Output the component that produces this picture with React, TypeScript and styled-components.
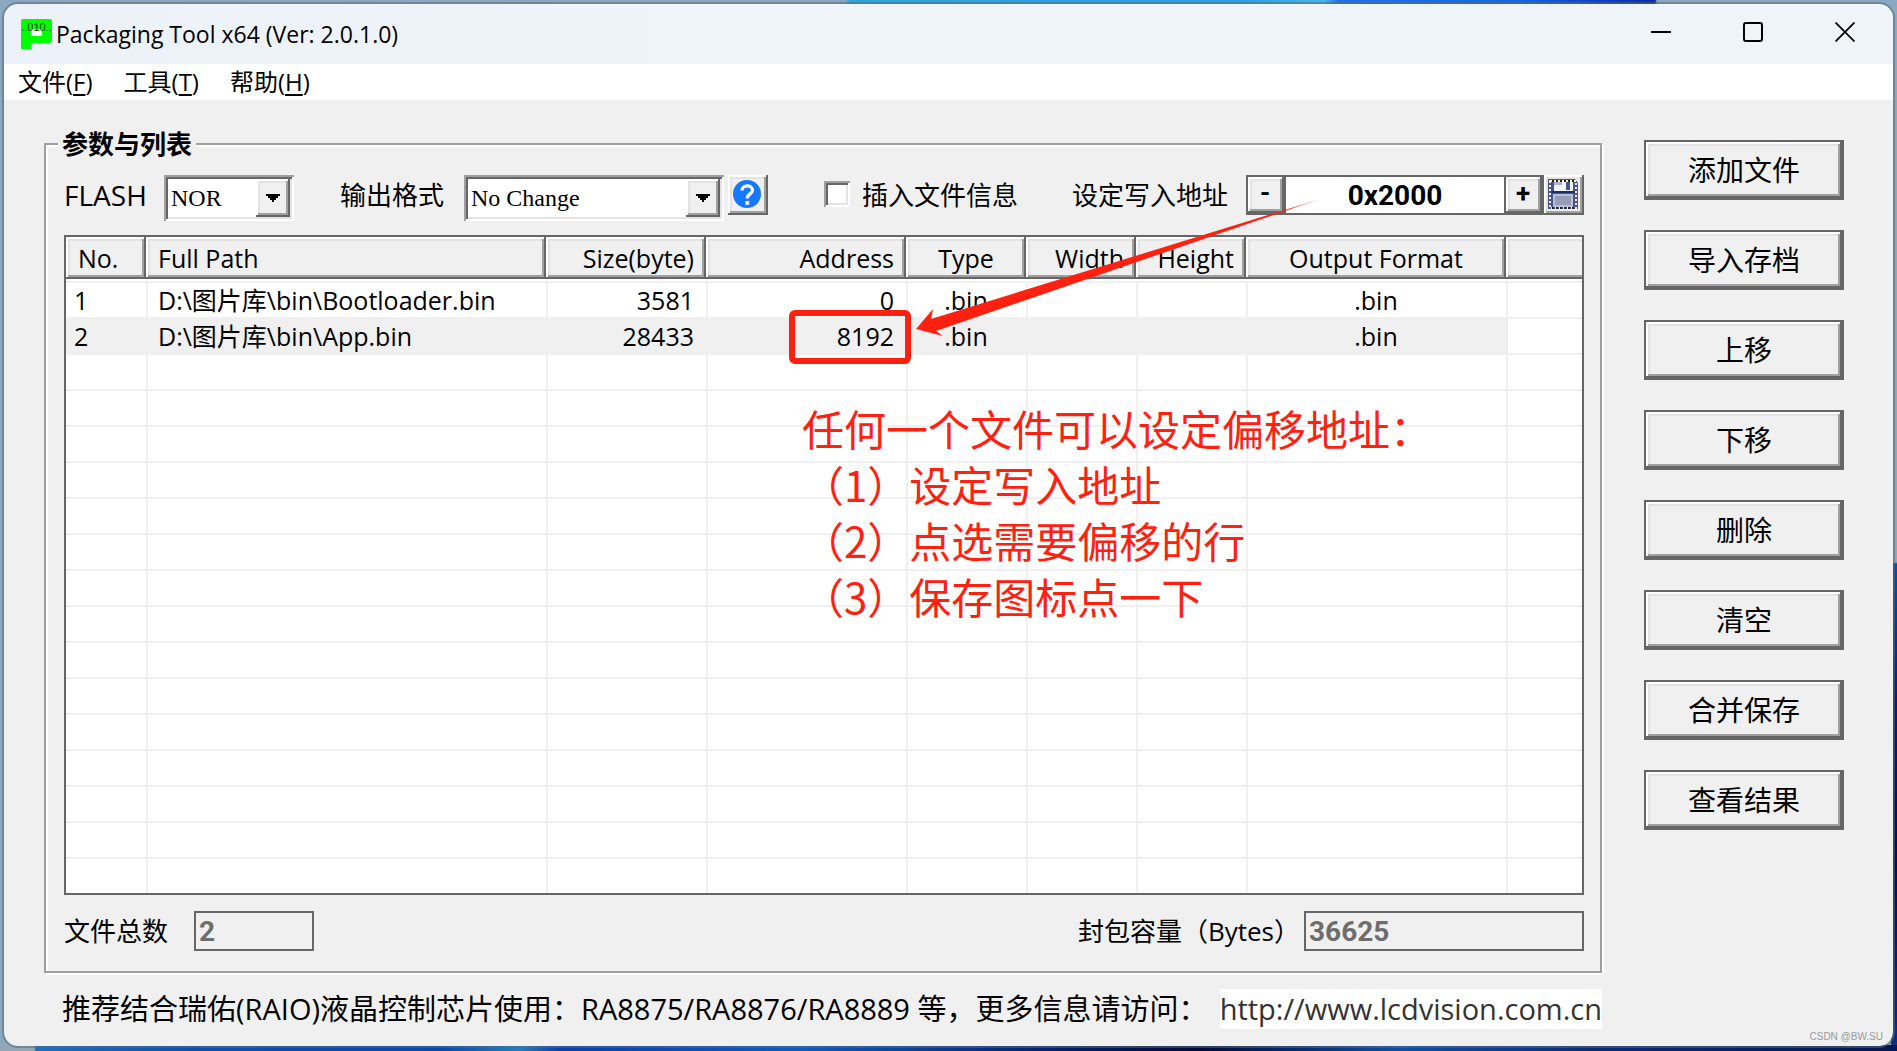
import React, { useState } from "react";
import styled, { createGlobalStyle, css } from "styled-components";

const face = "#f0f0f0";
const dark = "#666666";
const shade = "#a0a0a0";
const light = "#e3e3e3";
const red = "#ff2010";
const uiFont = `"Open Sans", "Noto Sans CJK SC", sans-serif`;

const GlobalStyle = createGlobalStyle`
  *, *::before, *::after { box-sizing: border-box; }
  body { margin: 0; font-family: ${uiFont}; font-size: 24px; color: #000; }
  button, input, select { font: inherit; color: inherit; border-radius: 0; margin: 0; }
`;

const raised = css`
  background: ${face};
  box-shadow: inset -2px -2px 0 ${dark}, inset 2px 2px 0 #fff,
    inset -4px -4px 0 ${shade}, inset 4px 4px 0 ${light};
`;

const Desktop = styled.div`
  min-height: 100vh;
  display: flex;
  padding: 4px 4px 5px;
  background:
    linear-gradient(90deg, #94a7b6 0 34px, #1c6fc4 36px, #0a4fae 200px, #0848b0 440px, #1f7fc4 520px, #0a3fae 560px, #0c5cc4 800px, #05206e 1050px, #020a3a 1200px, #0b4fae 1400px, #0a2a78 1600px, #041650 100%) bottom / 100% 6px no-repeat,
    linear-gradient(90deg, transparent 845px, #2ba4dc 850px, #2f9fe8 1240px, #43b6e6 1325px, #1c74e8 1338px, #1466e4 1520px, #0c3fc8 1600px, #0a2c9c 1655px, transparent 1657px) top / 100% 4px no-repeat,
    linear-gradient(180deg, #8aa9c0 0 562px, #0d4da4 564px, #04206e 700px, #001048 860px, #0c2f80 100%) right / 6px 100% no-repeat,
    #8ba8c0;
`;

const AppWindow = styled.div`
  position: relative;
  flex: 1;
  min-width: 0;
  display: flex;
  flex-direction: column;
  border-radius: 14px;
  overflow: hidden;
  background: ${face};
  outline: 2px solid rgba(90, 105, 120, 0.55);
`;

const TitleBar = styled.header`
  display: flex;
  align-items: center;
  height: 60px;
  padding: 0 2px 0 17px;
  background: linear-gradient(90deg, #edf2fa, #eff4f8 40%);
`;

const AppTitle = styled.h1`
  flex: 1;
  margin: 0 0 0 4px;
  font-size: 23px;
  line-height: 30px;
  font-weight: 400;
`;

const CaptionButton = styled.button`
  display: grid;
  place-items: center;
  align-self: flex-start;
  width: 92px;
  height: 56px;
  padding: 0;
  border: 0;
  background: transparent;
`;

const MenuBar = styled.nav`
  display: flex;
  align-items: center;
  gap: 31px;
  height: 36px;
  padding: 0 14px;
  background: #fff;
`;

const MenuItem = styled.button`
  padding: 0;
  border: 0;
  background: transparent;
  font-size: 24px;
  line-height: 34px;
  u { text-underline-offset: 3px; text-decoration-thickness: 2px; }
`;

const Body = styled.main`
  flex: 1;
  display: grid;
  grid-template-columns: minmax(0, 1fr) 200px;
  grid-template-rows: auto 1fr;
  column-gap: 42px;
  row-gap: 16px;
  padding: 25px 49px 17px 40px;
`;

const Group = styled.fieldset`
  min-width: 0;
  margin: 0;
  padding: 0 16px 20px 18px;
  border: 2px solid ${shade};
  box-shadow: 2px 2px 0 #fff, inset 2px 2px 0 #fff;
`;

const Legend = styled.legend`
  margin-left: -6px;
  padding: 0 4px;
  background: ${face};
  font-size: 26px;
  line-height: 38px;
  font-weight: 700;
`;

const Toolbar = styled.div`
  display: flex;
  align-items: flex-start;
  height: 46px;
  margin: 12px 0 14px;
`;

const Label = styled.label<{ $width?: number; $size?: number }>`
  flex: none;
  width: ${(p) => (p.$width ? `${p.$width}px` : "auto")};
  font-size: ${(p) => p.$size ?? 26}px;
  line-height: 40px;
  white-space: nowrap;
`;

const SelectBox = styled.div<{ $width: number; $after: number }>`
  flex: none;
  display: grid;
  width: ${(p) => p.$width}px;
  height: 46px;
  margin-right: ${(p) => p.$after}px;
  padding: 4px;
  background: #fff;
  box-shadow: inset 2px 2px 0 ${shade}, inset -2px -2px 0 #fff,
    inset 4px 4px 0 ${dark}, inset -4px -4px 0 ${light};
`;

const Select = styled.select`
  grid-area: 1 / 1;
  appearance: none;
  width: 100%;
  padding: 0 36px 0 3px;
  border: 0;
  background: transparent;
  font-family: "Liberation Serif", "Noto Sans CJK SC", serif;
  font-size: 24px;
`;

const DropArrow = styled.span`
  grid-area: 1 / 1;
  justify-self: end;
  display: grid;
  place-items: center;
  width: 34px;
  height: 38px;
  pointer-events: none;
  ${raised}
`;

const IconButton = styled.button`
  flex: none;
  display: grid;
  place-items: center;
  width: 40px;
  height: 40px;
  padding: 0 2px 2px 0;
  border: 0;
  ${raised}
`;

const StepButton = styled.button`
  flex: none;
  width: 40px;
  padding: 0 2px 4px 0;
  border: 2px solid ${dark};
  font-family: Roboto, "Noto Sans CJK SC", sans-serif;
  font-size: 26px;
  line-height: 30px;
  font-weight: 700;
  ${raised}
`;

const CheckLabel = styled(Label)`
  display: flex;
  gap: 12px;
  margin-left: 56px;
`;

const CheckBox = styled.input`
  appearance: none;
  width: 26px;
  height: 26px;
  margin-top: 6px;
  background: #fff;
  box-shadow: inset 2px 2px 0 ${shade}, inset -2px -2px 0 #fff,
    inset 4px 4px 0 ${dark}, inset -4px -4px 0 ${light};
  &:checked { background: ${dark}; }
`;

const AddressLabel = styled(Label)`
  margin-left: auto;
  margin-right: 18px;
`;

const AddressField = styled.div`
  display: flex;
  height: 40px;
`;

const AddressInput = styled.input`
  width: 218px;
  padding: 0;
  border: solid ${dark};
  border-width: 2px 0;
  background: #fff;
  font-family: Roboto, "Noto Sans CJK SC", sans-serif;
  font-size: 28px;
  font-weight: 700;
  text-align: center;
`;

const ListBox = styled.div`
  position: relative;
  border: 2px solid ${dark};
  background: #fff;
`;

const Table = styled.table`
  width: 100%;
  table-layout: fixed;
  border-collapse: separate;
  border-spacing: 0;
  font-size: 25px;
  line-height: 34px;
  white-space: nowrap;
`;

type Align = "left" | "right" | "center";

const HeadCell = styled.th<{ $align: Align }>`
  height: 44px;
  padding: 0 12px;
  border-bottom: 2px solid #fff;
  font-weight: 400;
  text-align: ${(p) => p.$align};
  ${raised}
  &:last-child {
    box-shadow: inset 0 -2px 0 ${dark}, inset 2px 2px 0 #fff,
      inset 0 -4px 0 ${shade}, inset 4px 4px 0 ${light};
  }
`;

const Cell = styled.td<{ $align: Align; $selected: boolean }>`
  height: 36px;
  padding: 0 12px 0 10px;
  border-top: 2px solid ${face};
  border-left: 2px solid ${face};
  background: ${(p) => (p.$selected ? face : "#fff")};
  text-align: ${(p) => p.$align};
  &:first-child { border-left: 0; padding-left: 8px; }
`;

const Note = styled.div`
  position: absolute;
  left: 736px;
  top: 163px;
  color: ${red};
  font-family: "Noto Sans CJK SC", sans-serif;
  font-size: 42px;
  line-height: 56px;
  white-space: nowrap;
  p { margin: 0; }
`;

const Markup = styled.svg`
  position: absolute;
  left: 718px;
  top: -46px;
  width: 540px;
  height: 180px;
  pointer-events: none;
`;

const Totals = styled.div`
  display: flex;
  justify-content: space-between;
  margin-top: 16px;
`;

const Total = styled.div<{ $gap: number }>`
  display: flex;
  gap: ${(p) => p.$gap}px;
`;

const TotalInput = styled.input<{ $width: number }>`
  width: ${(p) => p.$width}px;
  height: 40px;
  padding: 0 3px;
  border: 2px solid ${dark};
  background: ${face};
  color: #6d6d6d;
  font-family: Roboto, "Noto Sans CJK SC", sans-serif;
  font-size: 28px;
  font-weight: 700;
`;

const SideButtons = styled.div`
  display: flex;
  flex-direction: column;
  gap: 30px;
  padding-top: 15px;
`;

const SideButton = styled.button`
  height: 60px;
  padding: 0;
  border: 2px solid ${dark};
  font-size: 28px;
  line-height: 40px;
  ${raised}
`;

const Footer = styled.footer`
  display: flex;
  justify-content: space-between;
  align-items: flex-start;
  padding: 0 0 0 18px;
  font-size: 29px;
  line-height: 40px;
  white-space: nowrap;
`;

const SiteLink = styled.a`
  flex: none;
  background: #fff;
  color: #333;
  text-decoration: none;
`;

const Watermark = styled.span`
  position: absolute;
  right: 10px;
  bottom: 1px;
  color: #999;
  font-family: "Liberation Sans", "Noto Sans CJK SC", sans-serif;
  font-size: 10px;
  line-height: 16px;
`;

const AppLogo = () => (
  <svg width="31" height="30" viewBox="0 0 31 30" aria-hidden="true">
    <path d="M2 0H29Q31 0 31 2V21Q31 24 28 24H10V30H0V2Q0 0 2 0Z" fill="#00ff00" />
    <path d="M10 10H21V17H10Z" fill="#fff" />
    <text x="15.5" y="12" textAnchor="middle" fontFamily="Liberation Sans, sans-serif" fontSize="11" fill="#003c00">..010..</text>
  </svg>
);

const HelpIcon = () => (
  <svg width="30" height="30" viewBox="0 0 30 30" aria-hidden="true">
    <circle cx="15" cy="15" r="14" fill="#1677ff" />
    <path d="M10 11.5C10 5.5 20.5 5.5 20.5 11.2C20.5 15 15.2 14.8 15.2 19.5" fill="none" stroke="#fff" strokeWidth="3.2" />
    <rect x="13.4" y="22" width="3.8" height="3.8" fill="#fff" />
  </svg>
);

const SaveIcon = () => (
  <svg width="32" height="32" viewBox="0 0 32 32" aria-hidden="true">
    <path d="M1 1H28L31 5V31H1Z" fill="#46568c" />
    <rect x="7" y="3" width="19" height="10" fill="#f2f4fa" />
    <path d="M7 3H15V7H7Z" fill="#aab2cc" />
    <rect x="19" y="4" width="4" height="8" fill="#46568c" />
    <path d="M4 14H28" stroke="#1b2f66" strokeWidth="2" />
    <rect x="6" y="16" width="20" height="13" fill="#b9bfd4" />
    <rect x="8" y="18" width="16" height="9" fill="#959db8" />
    <rect x="3" y="3" width="26" height="27" fill="none" stroke="#fff0c8" strokeWidth="2" strokeDasharray="2 2" />
    <path d="M3 3H29M3 30H29" stroke="#222" strokeWidth="2" strokeDasharray="2 2" strokeDashoffset="2" />
  </svg>
);

type Column = { title: string; align: Align; width?: number };

const columns: Column[] = [
  { title: "No.", align: "left", width: 80 },
  { title: "Full Path", align: "left", width: 400 },
  { title: "Size(byte)", align: "right", width: 160 },
  { title: "Address", align: "right", width: 200 },
  { title: "Type", align: "center", width: 120 },
  { title: "Width", align: "right", width: 110 },
  { title: "Height", align: "right", width: 110 },
  { title: "Output Format", align: "center", width: 260 },
  { title: "", align: "left" },
];

const files = [
  ["1", "D:\\图片库\\bin\\Bootloader.bin", "3581", "0", ".bin", "", "", ".bin"],
  ["2", "D:\\图片库\\bin\\App.bin", "28433", "8192", ".bin", "", "", ".bin"],
];

const rowCount = 17;
const selectedRow = 1;

const menus = [
  ["文件", "F"],
  ["工具", "T"],
  ["帮助", "H"],
];

const actions = ["添加文件", "导入存档", "上移", "下移", "删除", "清空", "合并保存", "查看结果"];

const Arrow = () => (
  <DropArrow>
    <svg width="14" height="8" viewBox="0 0 14 8" aria-hidden="true">
      <path d="M0 0H14V2H12V4H10V6H8V8H6V6H4V4H2V2H0Z" fill="#000" />
    </svg>
  </DropArrow>
);

export default function App() {
  const [address, setAddress] = useState(0x2000);
  const step = (delta: number) => setAddress((a) => Math.max(0, a + delta));

  return (
    <Desktop>
      <GlobalStyle />
      <AppWindow>
        <TitleBar>
          <AppLogo />
          <AppTitle>Packaging Tool x64 (Ver: 2.0.1.0)</AppTitle>
          <CaptionButton aria-label="Minimize">
            <svg width="20" height="20" viewBox="0 0 20 20"><path d="M0 10H20" stroke="#000" strokeWidth="2" /></svg>
          </CaptionButton>
          <CaptionButton aria-label="Maximize">
            <svg width="20" height="20" viewBox="0 0 20 20"><rect x="1" y="1" width="18" height="18" rx="2" fill="none" stroke="#000" strokeWidth="2" /></svg>
          </CaptionButton>
          <CaptionButton aria-label="Close">
            <svg width="20" height="20" viewBox="0 0 20 20"><path d="M0.5 0.5L19.5 19.5M19.5 0.5L0.5 19.5" stroke="#000" strokeWidth="1.8" /></svg>
          </CaptionButton>
        </TitleBar>

        <MenuBar>
          {menus.map(([name, key]) => (
            <MenuItem key={key}>{name}(<u>{key}</u>)</MenuItem>
          ))}
        </MenuBar>

        <Body>
          <Group>
            <Legend>参数与列表</Legend>

            <Toolbar>
              <Label htmlFor="flash" $width={100} $size={28}>FLASH</Label>
              <SelectBox $width={130} $after={46}>
                <Select id="flash" defaultValue="NOR"><option>NOR</option><option>NAND</option></Select>
                <Arrow />
              </SelectBox>
              <Label htmlFor="format" $width={124}>输出格式</Label>
              <SelectBox $width={260} $after={4}>
                <Select id="format" defaultValue="No Change"><option>No Change</option></Select>
                <Arrow />
              </SelectBox>
              <IconButton aria-label="Help"><HelpIcon /></IconButton>
              <CheckLabel>
                <CheckBox type="checkbox" />
                插入文件信息
              </CheckLabel>
              <AddressLabel htmlFor="address">设定写入地址</AddressLabel>
              <AddressField>
                <StepButton onClick={() => step(-0x100)}>-</StepButton>
                <AddressInput
                  id="address"
                  value={"0x" + address.toString(16)}
                  onChange={(e) => setAddress(parseInt(e.target.value, 16) || 0)}
                />
                <StepButton onClick={() => step(0x100)}>+</StepButton>
                <IconButton aria-label="Save"><SaveIcon /></IconButton>
              </AddressField>
            </Toolbar>

            <ListBox>
              <Table>
                <colgroup>
                  {columns.map((c, i) => <col key={i} width={c.width} />)}
                </colgroup>
                <thead>
                  <tr>{columns.map((c, i) => <HeadCell key={i} $align={c.align}>{c.title}</HeadCell>)}</tr>
                </thead>
                <tbody>
                  {Array.from({ length: rowCount }, (_, r) => (
                    <tr key={r}>
                      {columns.map((c, i) => (
                        <Cell key={i} $align={c.align} $selected={r === selectedRow && c.title !== ""}>
                          {files[r]?.[i]}
                        </Cell>
                      ))}
                    </tr>
                  ))}
                </tbody>
              </Table>

              <Note>
                <p>任何一个文件可以设定偏移地址：</p>
                <p>（1）设定写入地址</p>
                <p>（2）点选需要偏移的行</p>
                <p>（3）保存图标点一下</p>
              </Note>

              <Markup viewBox="0 0 540 180" aria-hidden="true">
                <defs>
                  <linearGradient id="tail" x1="0" x2="1" y1="0" y2="0">
                    <stop offset="0.9" stopColor={red} />
                    <stop offset="1" stopColor={red} stopOpacity="0.4" />
                  </linearGradient>
                </defs>
                <rect x="8" y="122" width="116" height="48" rx="3" fill="none" stroke={red} strokeWidth="6" />
                <path d="M132 138L149 118L147 128L536 8L152 140L159 145Z" fill="url(#tail)" />
              </Markup>
            </ListBox>

            <Totals>
              <Total $gap={26}>
                <Label htmlFor="count">文件总数</Label>
                <TotalInput id="count" $width={120} value="2" readOnly />
              </Total>
              <Total $gap={4}>
                <Label htmlFor="bytes">封包容量（Bytes）</Label>
                <TotalInput id="bytes" $width={280} value="36625" readOnly />
              </Total>
            </Totals>
          </Group>

          <SideButtons>
            {actions.map((a) => <SideButton key={a}>{a}</SideButton>)}
          </SideButtons>

          <Footer>
            <span>推荐结合瑞佑(RAIO)液晶控制芯片使用：RA8875/RA8876/RA8889 等，更多信息请访问：</span>
            <SiteLink href="http://www.lcdvision.com.cn">http://www.lcdvision.com.cn</SiteLink>
          </Footer>
        </Body>
        <Watermark>CSDN @BW.SU</Watermark>
      </AppWindow>
    </Desktop>
  );
}
